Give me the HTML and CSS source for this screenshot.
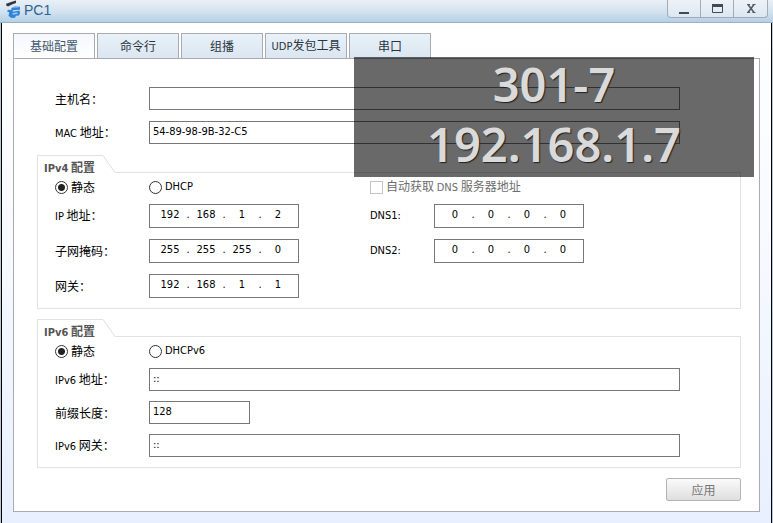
FILE: index.html
```html
<!DOCTYPE html>
<html lang="zh-CN">
<head>
    <meta charset="UTF-8">
    <meta name="viewport" content="width=device-width, initial-scale=1.0">
    <title>PC1</title>
    <link rel="stylesheet" href="styles.css">
</head>
<body>
    <div class="window">
        <header class="titlebar">
            <svg class="logo" width="16" height="19" viewBox="0 0 16 19" aria-hidden="true">
                <path d="M5 2l5-1.500v2.500L6.500 4.200 2 6.500.200 5.500V3.800z" fill="#34383d"/>
                <path d="M5.500 8l3-1.500 5.500.2v3l-7 .6-.4 1.500 7-1.200.4 2.500-1 2.500-3 .2-1 2-3.500.2-3-2 .7-3.800-2.200-.8 1-1.700 3.200.3z" fill="#2f83d8"/>
                <path d="M6.500 13l5-.8-.2 1.800-4.500.8z" fill="#9cc6ee"/>
                <path d="M7 7.500l5.500-.2" stroke="#6fb0ea"/>
            </svg>
            <h1>PC1</h1>
            <div class="window-buttons">
                <button type="button" aria-label="最小化">
                    <svg width="12" height="12" viewBox="0 0 12 12"><path d="M1 9h10v2H1z" fill="#444a55"/></svg>
                </button>
                <button type="button" aria-label="最大化">
                    <svg width="12" height="12" viewBox="0 0 12 12"><path d="M1.500 1.500h10v8h-10z" fill="none" stroke="#444a55"/><path d="M1 1h11v3H1z" fill="#444a55"/></svg>
                </button>
                <button type="button" aria-label="关闭">
                    <svg width="12" height="12" viewBox="0 0 12 12"><path d="M3 1.500L9 9.500M9 1.500L3 9.500" stroke="#555b66" stroke-width="1.600"/><path d="M2 1.500h3M7.500 1.500h3M2 9.500h3M7.500 9.500h3" stroke="#555b66"/></svg>
                </button>
            </div>
        </header>

        <main class="content">
            <nav class="tabs" role="tablist">
                <button type="button" role="tab" class="tab active" aria-selected="true">基础配置</button>
                <button type="button" role="tab" class="tab">命令行</button>
                <button type="button" role="tab" class="tab">组播</button>
                <button type="button" role="tab" class="tab"><span class="latin">UDP</span>发包工具</button>
                <button type="button" role="tab" class="tab">串口</button>
            </nav>

            <form class="panel">
                <div class="rows top">
                    <div class="row">
                        <label for="host">主机名：</label>
                        <input type="text" id="host" class="text">
                    </div>
                    <div class="row">
                        <label for="mac"><span class="latin">MAC</span> 地址：</label>
                        <input type="text" id="mac" class="text" value="54-89-98-9B-32-C5">
                    </div>
                </div>

                <section class="group" aria-labelledby="v4-title">
                    <div class="group-head">
                        <h2 id="v4-title"><span class="latin">IPv4</span> 配置</h2>
                        <svg width="12" height="18" viewBox="0 0 12 18"><path d="M0 .5L12 17.500" fill="none" stroke="#dedede"/></svg>
                        <div class="group-line"></div>
                    </div>
                    <div class="group-body">
                        <div class="row-v4 modes">
                            <label class="choice"><input type="radio" name="v4" checked>静态</label>
                            <label class="choice"><input type="radio" name="v4"><span class="latin">DHCP</span></label>
                            <label class="choice disabled"><input type="checkbox" disabled><span>自动获取 <span class="latin">DNS</span> 服务器地址</span></label>
                        </div>
                        <div class="rows">
                            <div class="row-v4">
                                <label for="ip"><span class="latin">IP</span> 地址：</label>
                                <div class="ip">
                                    <input type="text" id="ip" value="192"><span>.</span><input type="text" aria-label="IP 2" value="168"><span>.</span><input type="text" aria-label="IP 3" value="1"><span>.</span><input type="text" aria-label="IP 4" value="2">
                                </div>
                                <label for="dns1" class="latin">DNS1:</label>
                                <div class="ip">
                                    <input type="text" id="dns1" value="0"><span>.</span><input type="text" aria-label="DNS1 2" value="0"><span>.</span><input type="text" aria-label="DNS1 3" value="0"><span>.</span><input type="text" aria-label="DNS1 4" value="0">
                                </div>
                            </div>
                            <div class="row-v4">
                                <label for="mask">子网掩码：</label>
                                <div class="ip">
                                    <input type="text" id="mask" value="255"><span>.</span><input type="text" aria-label="掩码 2" value="255"><span>.</span><input type="text" aria-label="掩码 3" value="255"><span>.</span><input type="text" aria-label="掩码 4" value="0">
                                </div>
                                <label for="dns2" class="latin">DNS2:</label>
                                <div class="ip">
                                    <input type="text" id="dns2" value="0"><span>.</span><input type="text" aria-label="DNS2 2" value="0"><span>.</span><input type="text" aria-label="DNS2 3" value="0"><span>.</span><input type="text" aria-label="DNS2 4" value="0">
                                </div>
                            </div>
                            <div class="row-v4">
                                <label for="gateway">网关：</label>
                                <div class="ip">
                                    <input type="text" id="gateway" value="192"><span>.</span><input type="text" aria-label="网关 2" value="168"><span>.</span><input type="text" aria-label="网关 3" value="1"><span>.</span><input type="text" aria-label="网关 4" value="1">
                                </div>
                            </div>
                        </div>
                    </div>
                </section>

                <section class="group" aria-labelledby="v6-title">
                    <div class="group-head">
                        <h2 id="v6-title"><span class="latin">IPv6</span> 配置</h2>
                        <svg width="12" height="18" viewBox="0 0 12 18"><path d="M0 .5L12 17.500" fill="none" stroke="#dedede"/></svg>
                        <div class="group-line"></div>
                    </div>
                    <div class="group-body">
                        <div class="row-v4 modes">
                            <label class="choice"><input type="radio" name="v6" checked>静态</label>
                            <label class="choice"><input type="radio" name="v6"><span class="latin">DHCPv6</span></label>
                        </div>
                        <div class="rows rows-v6">
                            <div class="row">
                                <label for="ip6"><span class="latin">IPv6</span> 地址：</label>
                                <input type="text" id="ip6" class="text" value="::">
                            </div>
                            <div class="row">
                                <label for="prefix">前缀长度：</label>
                                <input type="text" id="prefix" class="text short" value="128">
                            </div>
                            <div class="row">
                                <label for="gateway6"><span class="latin">IPv6</span> 网关：</label>
                                <input type="text" id="gateway6" class="text" value="::">
                            </div>
                        </div>
                    </div>
                </section>

                <button type="button" class="apply">应用</button>
            </form>
        </main>
    </div>

    <div class="overlay">
        <div>301-7</div>
        <div>192.168.1.7</div>
    </div>
</body>
</html>
```
FILE: styles.css
```css
:root {
    --field-border: #777777;
    --group-border: #E2E2E2;
    --panel-border: #A9ABB0;
}

* {
    box-sizing: border-box;
}

body {
    margin: 0;
    font-family: "Noto Sans CJK SC", sans-serif;
    font-size: 12px;
    line-height: 18px;
    color: #000000;
}

button,
input {
    font: inherit;
    color: inherit;
    margin: 0;
    padding: 0;
}

.latin,
.text,
.ip {
    font-family: "DejaVu Sans Condensed", "DejaVu Sans", "Noto Sans CJK SC", sans-serif;
    font-size: 11px;
}

.window {
    min-height: 100vh;
    display: flex;
    flex-direction: column;
}

.titlebar {
    display: flex;
    height: 23px;
    padding: 0 5px 0 6px;
    background: linear-gradient(#E9F0F7, #D5E3F0 50%, #B4D0E6);
    border-bottom: 1px solid #9DB1C2;
}

.logo {
    margin-right: 2px;
}

h1 {
    margin: 0;
    font: 14px/20px "Liberation Sans", sans-serif;
    color: #2F638F;
}

.window-buttons {
    display: flex;
    height: 18px;
    margin-left: auto;
    border: 1px solid #A3ABB5;
    border-top: none;
    border-radius: 0 0 4px 4px;
    background: linear-gradient(#EDF2F8, #DCE7F1);
    overflow: hidden;
}

.window-buttons button {
    width: 33px;
    border: none;
    border-right: 1px solid #A3ABB5;
    background: none;
}

.window-buttons button:last-child {
    border-right: none;
}

.window-buttons svg {
    display: block;
    margin: 0 auto;
}

.content {
    flex: 1;
    display: flex;
    flex-direction: column;
    padding: 10px 11px 11px;
    background: linear-gradient(#FFFFFF, #F8FAFF 40%, #E8F0FF);
    border: solid #000000;
    border-width: 0 1px;
    margin: 0 1px;
    box-shadow: -1px 0 #B5C8D6, 1px 0 #B5C8D6;
}

.tabs {
    display: flex;
    gap: 2px;
}

.tab {
    width: 82px;
    height: 25px;
    border: 1px solid var(--panel-border);
    border-bottom: none;
    background: linear-gradient(#E9F1F9, #DAE6F1);
    color: #2B3440;
}

.tab.active {
    background: linear-gradient(#F3F8FD, #FFFFFF);
    color: #41596F;
}

.panel {
    flex: 1;
    display: flex;
    flex-direction: column;
    gap: 10px;
    padding: 28px 18px 10px 23px;
    background: #FFFFFF;
    border: 1px solid var(--panel-border);
}

.rows {
    display: flex;
    flex-direction: column;
    gap: 11px;
}

.rows-v6 {
    gap: 10px;
}

.top {
    padding: 0 61px 1px 18px;
}

.row {
    display: grid;
    grid-template-columns: 94px 1fr;
    align-items: center;
}

.row-v4 {
    display: grid;
    grid-template-columns: 94px 221px 64px 150px;
    align-items: center;
}

.text {
    width: 100%;
    height: 23px;
    padding: 0 3px 2px;
    border: 1px solid var(--field-border);
    background: #FFFFFF;
}

.short {
    width: 101px;
}

.ip {
    display: flex;
    width: 150px;
    height: 24px;
    padding: 0 8px 2px;
    border: 1px solid var(--field-border);
    background: #FFFFFF;
    line-height: 20px;
}

.ip input {
    width: 24px;
    border: none;
    background: none;
    text-align: center;
}

.ip span {
    width: 12px;
    text-align: center;
}

.group-head {
    display: flex;
    height: 18px;
}

.group-head svg {
    flex: none;
}

h2 {
    width: 66px;
    margin: 0;
    padding: 2px 0 0 6px;
    border: solid var(--group-border);
    border-width: 1px 0 0 1px;
    font-size: 12px;
    line-height: 18px;
    font-weight: bold;
    color: #555555;
    white-space: nowrap;
}

.group-line {
    flex: 1;
    border-bottom: 1px solid var(--group-border);
}

.group-body {
    padding: 4px 60px 10px 17px;
    border: 1px solid var(--group-border);
    border-top: none;
}

.modes {
    height: 20px;
    margin-bottom: 7px;
}

.choice {
    display: flex;
    align-items: center;
    gap: 3px;
    white-space: nowrap;
}

.choice input {
    appearance: none;
    flex: none;
    width: 13px;
    height: 13px;
    border: 1px solid #333333;
    background: #FFFFFF;
}

.choice input[type="radio"] {
    border-radius: 50%;
}

.choice input[type="radio"]:checked {
    background: radial-gradient(circle, #222222 3px, #FFFFFF 4px);
}

.disabled {
    color: #6D6D6D;
}

.choice input:disabled {
    border-color: #C4C4C4;
}

.apply {
    align-self: flex-end;
    width: 75px;
    height: 23px;
    border: 1px solid #B4B4B4;
    border-radius: 2px;
    background: linear-gradient(#FAFAFA, #DFDFDF);
    color: #777777;
}

/* caption floating over the window */
.overlay {
    position: absolute;
    top: 57px;
    right: 19px;
    width: 400px;
    height: 120px;
    padding-bottom: 6px;
    display: flex;
    flex-direction: column;
    justify-content: center;
    background: rgba(0, 0, 0, 0.59);
    color: #DADADA;
    font: 600 47px/60px "Noto Sans", sans-serif;
    text-align: center;
    text-shadow: 1px 1px 1px #222222;
    pointer-events: none;
}
```
